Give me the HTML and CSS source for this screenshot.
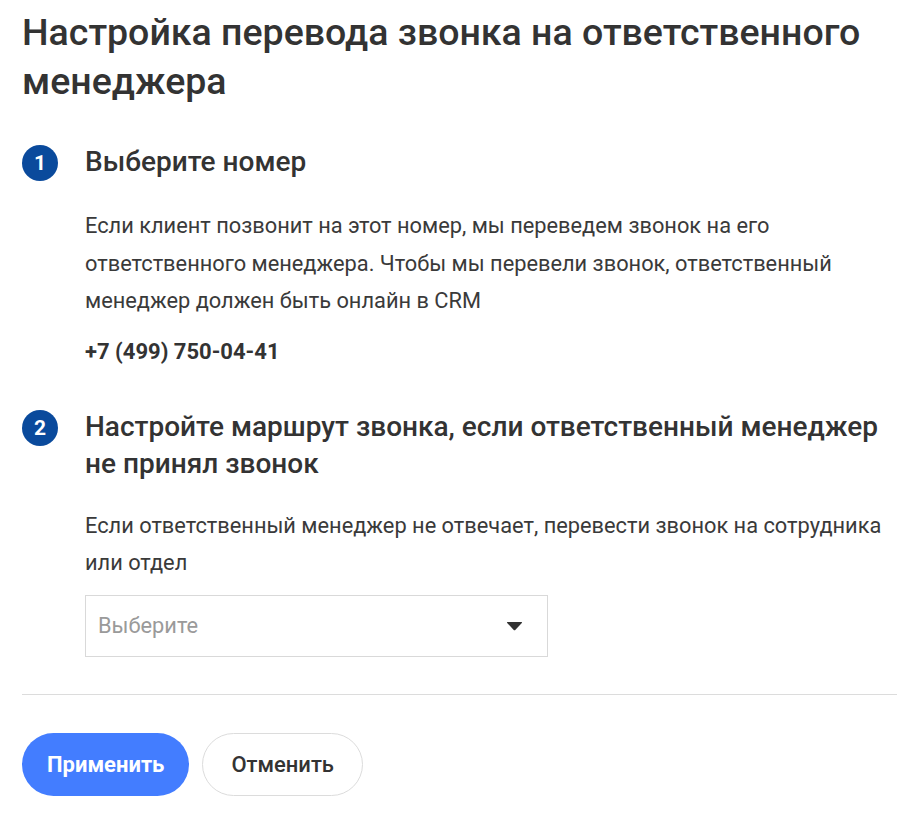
FILE: index.html
```html
<!DOCTYPE html>
<html lang="ru">
<head>
<meta charset="utf-8">
<title>Настройка перевода звонка</title>
<link rel="stylesheet" href="styles.css">
</head>
<body>
<div class="page">
  <h1 class="title">Настройка перевода звонка на ответственного менеджера</h1>

  <section class="step step-first">
    <div class="step-num">1</div>
    <div class="step-body">
      <h2 class="step-title">Выберите номер</h2>
      <p class="step-text">Если клиент позвонит на этот номер, мы переведем звонок на его ответственного менеджера. Чтобы мы перевели звонок, ответственный менеджер должен быть онлайн в CRM</p>
      <div class="phone">+7 (499) 750-04-41</div>
    </div>
  </section>

  <section class="step step-second">
    <div class="step-num">2</div>
    <div class="step-body">
      <h2 class="step-title">Настройте маршрут звонка, если ответственный менеджер не принял звонок</h2>
      <p class="step-text">Если ответственный менеджер не отвечает, перевести звонок на сотрудника или отдел</p>
      <div class="select">
        <span class="select-placeholder">Выберите</span>
        <svg class="select-arrow" width="17" height="10" viewBox="0 0 17 10"><path d="M1.5 1 L15.5 1 Q16.5 1 15.8 1.9 L9.5 8.8 Q8.5 9.8 7.5 8.8 L1.2 1.9 Q0.5 1 1.5 1 Z" fill="#333"/></svg>
      </div>
    </div>
  </section>

  <hr class="divider">

  <div class="actions">
    <button class="btn btn-primary">Применить</button>
    <button class="btn btn-secondary">Отменить</button>
  </div>
</div>
</body>
</html>
```

FILE: styles.css
```css
* { box-sizing: border-box; }

body {
  margin: 0;
  background: #fff;
  font-family: Roboto, "Liberation Sans", sans-serif;
  color: #333;
}

.page {
  padding: 8px 23px 0 22px;
}

.title {
  margin: 0;
  font-size: 37.5px;
  line-height: 49px;
  font-weight: 500;
  color: #333;
}

.step {
  display: grid;
  grid-template-columns: 36px 1fr;
  column-gap: 27px;
}

.step-first { margin-top: 37px; }
.step-second { margin-top: 38px; }

.step-num {
  width: 36px;
  height: 36px;
  margin-top: 2px;
  border-radius: 50%;
  background: #0a4a9c;
  color: #fff;
  font-size: 21px;
  font-weight: 700;
  display: flex;
  align-items: center;
  justify-content: center;
}

.step-title {
  margin: 0;
  font-size: 28px;
  line-height: 37px;
  font-weight: 500;
  color: #333;
}

.step-text {
  margin: 27px 0 0;
  font-size: 21.8px;
  line-height: 37.5px;
  color: #3a3a3a;
}

.step-second .step-text {
  margin-top: 25px;
  line-height: 37px;
}

.phone {
  margin-top: 13px;
  font-size: 22px;
  line-height: 37px;
  font-weight: 700;
  color: #333;
}

.select {
  margin-top: 14px;
  width: 463px;
  height: 62px;
  border: 1px solid #d9d9d9;
  display: flex;
  align-items: center;
  justify-content: space-between;
  padding: 0 24px 0 12px;
}

.select-placeholder {
  font-size: 21.8px;
  color: #9a9a9a;
}

.divider {
  margin: 37px 0 0;
  border: 0;
  border-top: 1px solid #dcdcdc;
}

.actions {
  display: flex;
  gap: 13px;
  margin-top: 38px;
}

.btn {
  height: 63px;
  border-radius: 32px;
  font-family: Roboto, "Liberation Sans", sans-serif;
  font-size: 22px;
  font-weight: 500;
  cursor: pointer;
}

.btn-primary {
  background: #437dff;
  border: 0;
  color: #fff;
  font-weight: 700;
  padding: 0 25px;
}

.btn-secondary {
  background: #fff;
  border: 1px solid #dcdcdc;
  color: #333;
  padding: 0 28px;
}
```
